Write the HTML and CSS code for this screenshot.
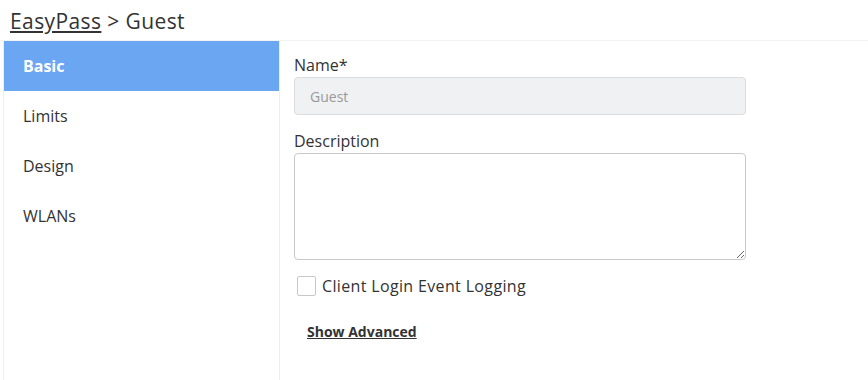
FILE: index.html
```html
<!DOCTYPE html>
<html lang="en">
<head>
    <meta charset="UTF-8">
    <meta name="viewport" content="width=device-width, initial-scale=1.0">
    <title>EasyPass - Guest</title>
    <link rel="stylesheet" href="styles.css">
</head>
<body>
    <div class="breadcrumb">
        <a href="#">EasyPass</a> &gt; Guest
    </div>
    <div class="panel">
        <ul class="tabs">
            <li class="active">Basic</li>
            <li>Limits</li>
            <li>Design</li>
            <li>WLANs</li>
        </ul>
        <form class="form">
            <label for="name">Name*</label>
            <input type="text" id="name" placeholder="Guest" disabled>

            <label for="description">Description</label>
            <textarea id="description"></textarea>

            <div class="check">
                <input type="checkbox" id="logging">
                <label for="logging">Client Login Event Logging</label>
            </div>

            <a class="advanced" href="#">Show Advanced</a>
        </form>
    </div>
</body>
</html>
```
FILE: styles.css
```css
*{
    margin: 0;
    padding: 0;
    box-sizing: border-box;
}

body{
    font-family: "Open Sans", Lato, sans-serif;
    color: #333;
    background-color: #fff;
}

.breadcrumb{
    font-size: 21px;
    line-height: 24px;
    letter-spacing: 0.4px;
    padding: 9px 10px 0 10px;
    height: 40px;
    color: #333;
}

.breadcrumb a{
    color: #333;
    text-decoration: underline;
}

.panel{
    display: flex;
    border-top: 1px solid #f2f2f2;
    height: 340px;
}

.tabs{
    list-style: none;
    width: 277px;
    margin-left: 3px;
    border-left: 1px solid #eee;
    border-right: 1px solid #eee;
}

.tabs li{
    height: 50px;
    line-height: 50px;
    padding-left: 19px;
    font-size: 16px;
    color: #333;
}

.tabs li.active{
    background-color: #6ba6f2;
    color: #fff;
    font-weight: bold;
}

.form{
    display: flex;
    flex-direction: column;
    align-items: flex-start;
    padding: 14px 0 0 14px;
}

.form label{
    font-size: 16px;
    line-height: 20px;
    color: #333;
    margin-bottom: 2px;
}

.form input[type="text"]{
    width: 452px;
    height: 38px;
    border: 1px solid #dcdcdc;
    border-radius: 4px;
    background-color: #f0f1f3;
    padding: 0 15px;
    font-family: inherit;
    font-size: 14px;
    margin-bottom: 16px;
}

.form input[type="text"]::placeholder{
    color: #999;
}

.form textarea{
    width: 452px;
    height: 107px;
    border: 1px solid #c8c8c8;
    border-radius: 4px;
    margin-bottom: 16px;
    font-family: inherit;
}

.check{
    display: flex;
    align-items: center;
    margin-left: 3px;
}

.check input{
    appearance: none;
    width: 19px;
    height: 20px;
    border: 1px solid #c8c8c8;
    border-radius: 2px;
    margin-right: 6px;
}

.check label{
    margin-bottom: 0;
    letter-spacing: 0.35px;
}

.advanced{
    margin: 27px 0 0 13px;
    font-size: 14px;
    line-height: 18px;
    font-weight: bold;
    color: #333;
    text-decoration: underline;
}
```
